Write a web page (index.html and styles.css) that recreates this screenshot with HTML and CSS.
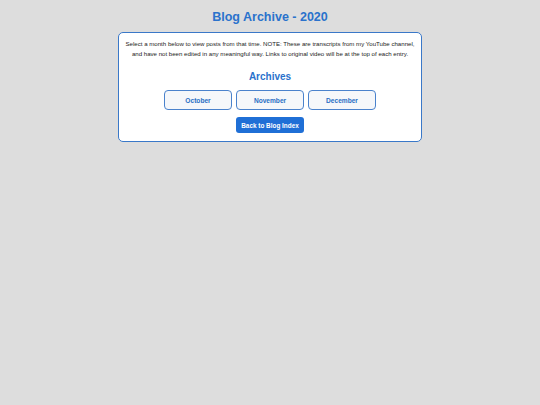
FILE: index.html
```html
<!DOCTYPE html>
<html>
<head>
<meta charset="utf-8">
<link rel="stylesheet" href="styles.css">
</head>
<body>
<h1 class="title">Blog Archive - 2020</h1>
<div class="card">
  <p class="intro">Select a month below to view posts from that time. NOTE: These are transcripts from my YouTube channel, and have not been edited in any meaningful way. Links to original video will be at the top of each entry.</p>
  <h2 class="section">Archives</h2>
  <div class="months">
    <a class="month">October</a>
    <a class="month">November</a>
    <a class="month">December</a>
  </div>
  <div class="back-row"><a class="back">Back to Blog Index</a></div>
</div>
</body>
</html>
```
FILE: styles.css
```css
html, body {
  margin: 0;
  padding: 0;
  background: #dddddd;
  font-family: "Liberation Sans", Arial, sans-serif;
}
body {
  padding-top: 10px;
}
.title {
  margin: 0 0 7px 0;
  text-align: center;
  font-size: 12.5px;
  line-height: 15px;
  color: #2a72cc;
  font-weight: bold;
}
.card {
  box-sizing: border-box;
  width: 304px;
  margin: 0 auto;
  background: #ffffff;
  border: 1px solid #3a78c8;
  border-radius: 5px;
  padding: 6px 6px 8px 6px;
  text-align: center;
}
.intro {
  margin: 0;
  font-size: 6.1px;
  line-height: 10px;
  color: #222;
}
.section {
  margin: 12px 0 7px 0;
  font-size: 10px;
  line-height: 12px;
  color: #2a72cc;
  font-weight: bold;
}
.months {
  display: flex;
  justify-content: center;
  gap: 4px;
}
.month {
  box-sizing: border-box;
  width: 68px;
  height: 20px;
  display: flex;
  align-items: center;
  justify-content: center;
  border: 1px solid #4a82cc;
  border-radius: 4px;
  background: #f5f7fa;
  color: #2a6fc4;
  font-size: 6.6px;
  font-weight: bold;
}
.back-row {
  display: flex;
  justify-content: center;
  margin-top: 7px;
}
.back {
  box-sizing: border-box;
  width: 68px;
  height: 16px;
  display: flex;
  align-items: center;
  justify-content: center;
  background: #1f6fd6;
  border-radius: 3px;
  color: #ffffff;
  font-size: 6.4px;
  font-weight: bold;
}
```
